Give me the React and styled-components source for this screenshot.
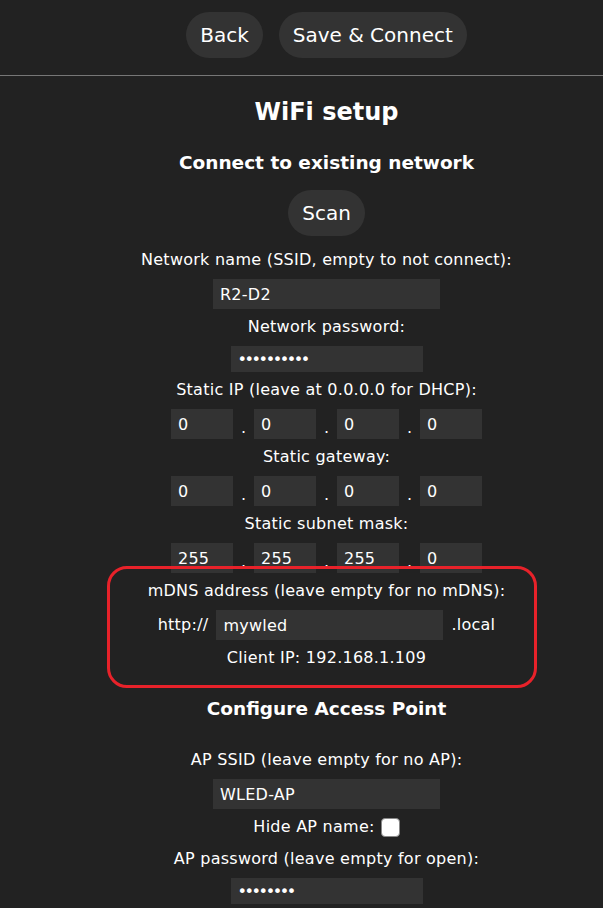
import styled, { createGlobalStyle } from "styled-components";

const GlobalStyle = createGlobalStyle`
	body {
		margin: 0;
		background: #222;
		color: #fff;
		font-family: "DejaVu Sans", Verdana, sans-serif;
		font-size: 16px;
		overflow: hidden;
	}
`;

const Header = styled.div`
	display: flex;
	justify-content: center;
	gap: 16px;
	padding: 12px 0 0 50px;
`;

const Button = styled.button`
	height: 46px;
	padding: 0 14px;
	margin-top: ${(p) => p.$top || 0}px;
	border: 0;
	border-radius: 23px;
	background: #333;
	color: #fff;
	font-family: inherit;
	font-size: 20px;
`;

const Rule = styled.hr`
	margin: 17px 0 0;
	border: 0;
	border-top: 1px solid #777;
	height: 0;
`;

const Main = styled.main`
	display: flex;
	flex-direction: column;
	align-items: center;
	padding-left: 50px;
`;

const Title = styled.h2`
	margin: 20px 0 0;
	font-size: 24px;
	line-height: 32px;
`;

const Subtitle = styled.h3`
	margin: ${(p) => p.$top}px 0 0;
	font-size: 18.5px;
	line-height: 32px;
`;

const Label = styled.div`
	line-height: 32px;
	letter-spacing: 0.25px;
	margin-top: ${(p) => p.$top || 0}px;
	display: flex;
	align-items: center;
	gap: 6px;
`;

const Input = styled.input`
	box-sizing: border-box;
	width: ${(p) => p.$w}px;
	height: ${(p) => p.$h || 30}px;
	margin: 3px 0 2px;
	padding: 0 7px;
	border: 0;
	outline: none;
	background: #333;
	color: #fff;
	font-family: inherit;
	font-size: 16px;
	letter-spacing: ${(p) => (p.type === "password" ? "-2.4px" : "0.25px")};
`;

const IpRow = styled.div`
	display: flex;
	align-items: center;
`;

const Dot = styled.span`
	width: 21px;
	text-align: center;
	padding-top: 8px;
`;

const MdnsBlock = styled.div`
	position: relative;
	align-self: stretch;
	display: flex;
	flex-direction: column;
	align-items: center;
`;

const Highlight = styled.div`
	position: absolute;
	left: 57px;
	top: -9px;
	width: 430px;
	height: 122px;
	box-sizing: border-box;
	border: 3px solid #e8222a;
	border-radius: 20px;
	pointer-events: none;
`;

const UrlRow = styled.div`
	display: flex;
	align-items: center;
	gap: 8px;
	letter-spacing: 0.25px;
`;

const Check = styled.input`
	appearance: none;
	width: 19px;
	height: 19px;
	margin: 0;
	background: #fff;
	border: 1px solid #888;
	border-radius: 4px;
`;

const IpInputs = ({ values }) => (
	<IpRow>
		{values.map((v, i) => (
			<span key={i} style={{ display: "contents" }}>
				{i > 0 && <Dot>.</Dot>}
				<Input $w={62} defaultValue={v} />
			</span>
		))}
	</IpRow>
);

export default function App() {
	return (
		<>
			<GlobalStyle />
			<Header>
				<Button>Back</Button>
				<Button>Save &amp; Connect</Button>
			</Header>
			<Rule />
			<Main>
				<Title>WiFi setup</Title>
				<Subtitle $top={19}>Connect to existing network</Subtitle>
				<Button $top={11}>Scan</Button>

				<Label $top={8}>Network name (SSID, empty to not connect):</Label>
				<Input $w={227} defaultValue="R2-D2" />
				<Label>Network password:</Label>
				<Input $w={192} $h={26} type="password" defaultValue="wledpasswd" />

				<Label>Static IP (leave at 0.0.0.0 for DHCP):</Label>
				<IpInputs values={["0", "0", "0", "0"]} />
				<Label>Static gateway:</Label>
				<IpInputs values={["0", "0", "0", "0"]} />
				<Label>Static subnet mask:</Label>
				<IpInputs values={["255", "255", "255", "0"]} />

				<MdnsBlock>
					<Label>mDNS address (leave empty for no mDNS):</Label>
					<UrlRow>
						<span>http://</span>
						<Input $w={227} defaultValue="mywled" />
						<span>.local</span>
					</UrlRow>
					<Label>Client IP: 192.168.1.109</Label>
					<Highlight />
				</MdnsBlock>

				<Subtitle $top={19}>Configure Access Point</Subtitle>
				<Label $top={19}>AP SSID (leave empty for no AP):</Label>
				<Input $w={227} defaultValue="WLED-AP" />
				<Label>
					Hide AP name: <Check type="checkbox" />
				</Label>
				<Label>AP password (leave empty for open):</Label>
				<Input $w={192} $h={26} type="password" defaultValue="wled1234" />
			</Main>
		</>
	);
}
